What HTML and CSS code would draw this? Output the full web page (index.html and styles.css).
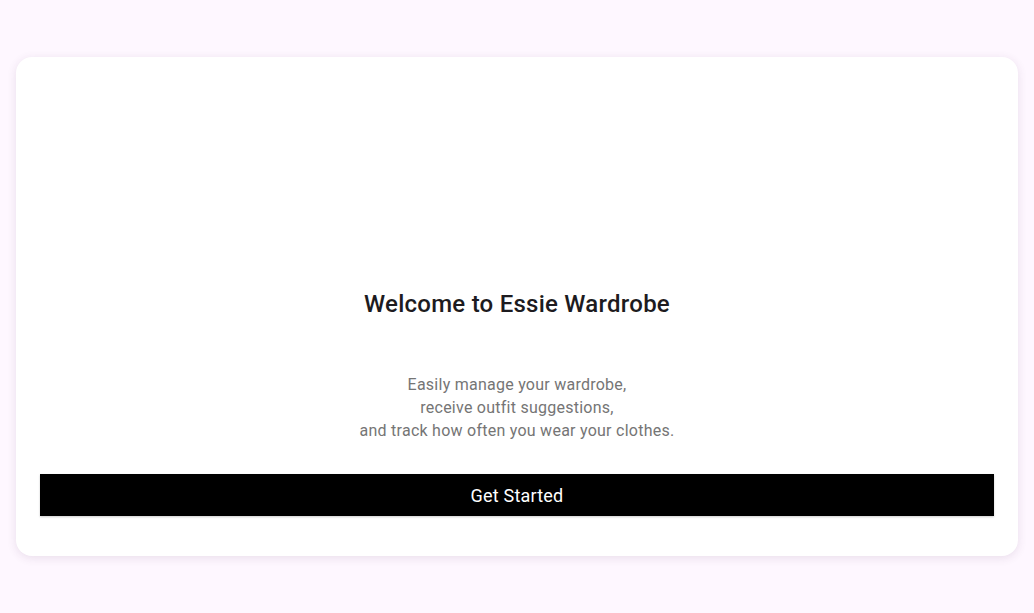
FILE: index.html
```html
<!DOCTYPE html>
<html lang="en">
<head>
<meta charset="utf-8">
<title>Essie Wardrobe</title>
<link rel="stylesheet" href="styles.css">
</head>
<body>
<main class="page">
  <section class="card">
    <div class="hero"></div>
    <h1 class="title">Welcome to Essie Wardrobe</h1>
    <p class="desc">Easily manage your wardrobe,<br>receive outfit suggestions,<br>and track how often you wear your clothes.</p>
    <button class="cta">Get Started</button>
  </section>
</main>
</body>
</html>
```
FILE: styles.css
```css
html, body {
  margin: 0;
  padding: 0;
  background: #fef7ff;
  font-family: Roboto, "Noto Sans", sans-serif;
}
.page {
  padding: 57px 16px;
  box-sizing: border-box;
  min-height: 613px;
}
.card {
  background: #ffffff;
  border-radius: 16px;
  box-shadow: 0 2px 10px rgba(80, 40, 90, 0.12);
  padding: 24px 24px 40px;
  display: flex;
  flex-direction: column;
  align-items: stretch;
  text-align: center;
}
.hero {
  height: 209px;
}
.title {
  margin: 0 0 55px;
  font-size: 24px;
  line-height: 28px;
  font-weight: 500;
  letter-spacing: 0.25px;
  color: #1d1b20;
}
.desc {
  margin: 0 0 32px;
  font-size: 16px;
  line-height: 23px;
  letter-spacing: 0.25px;
  color: #757575;
}
.cta {
  height: 42px;
  border: none;
  background: #000000;
  color: #ffffff;
  font-family: Roboto, "Noto Sans", sans-serif;
  font-size: 18px;
  letter-spacing: 0.2px;
  border-radius: 0;
  box-shadow: 0 1px 2px rgba(0, 0, 0, 0.2);
  cursor: pointer;
}
```
